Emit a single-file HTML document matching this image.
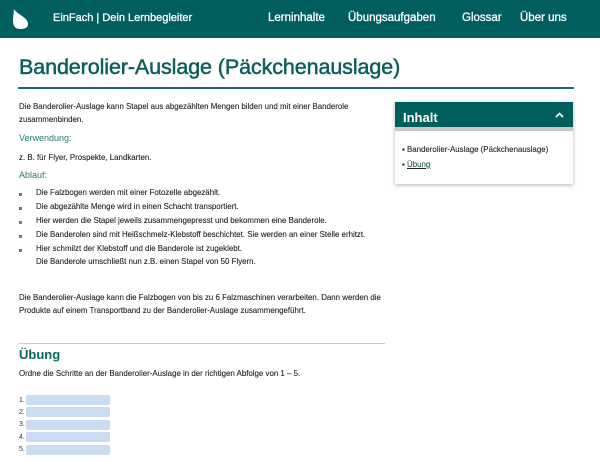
<!DOCTYPE html>
<html><head><meta charset="utf-8"><style>
*{margin:0;padding:0;box-sizing:border-box}
body{width:600px;height:462px;overflow:hidden;background:#fff;font-family:"Liberation Sans",sans-serif;color:#222;position:relative}
.hdr{position:absolute;left:0;top:0;width:600px;height:38px;background:#005f5d;color:#fff;font-size:12px;-webkit-text-stroke:0.3px #fff}
.hdr span{position:absolute;top:12px}
h1{position:absolute;left:19px;top:55px;font-size:21.5px;color:#0d5e5b;font-weight:normal;letter-spacing:-0.1px;-webkit-text-stroke:0.5px #0d5e5b}
.rule{position:absolute;left:18px;top:87px;width:556px;height:2px;background:#1a6663}
.t{position:absolute;font-size:7.9px;color:#222;line-height:12.5px;-webkit-text-stroke:0.1px #222}
.g{position:absolute;font-size:9px;color:#2a7a70}
.b{position:absolute;left:19px;width:3px;height:3px;background:#4a8a7a}
.box{position:absolute;left:395px;top:102px;width:178px;height:82px;box-shadow:0 1px 4px rgba(0,0,0,.3);background:#fff}
.box .h{height:29px;background:#005f5d;color:#fff;font-size:13px;font-weight:bold;padding:8px 8px;border-bottom:4px solid #c8c8c8;position:relative}
.in{position:absolute;left:26px;width:84px;height:10px;background:#c9dcf1;border-radius:2px}
.n{position:absolute;left:19px;font-size:7px;color:#333}
</style></head><body>
<div class="hdr">
<svg style="position:absolute;left:12px;top:8px" width="18" height="22" viewBox="0 0 18 22"><path d="M2 1 C4 6 16 9 16 16 C16 20 12 21 8 21 C3 21 1 18 1 12 Z" fill="#fff"/></svg>
<span style="left:53px;font-size:11px">EinFach | Dein Lernbegleiter</span>
<span style="left:268px;font-size:11.5px">Lerninhalte</span>
<span style="left:348px;font-size:11.5px">Übungsaufgaben</span>
<span style="left:462px;font-size:11.5px">Glossar</span>
<span style="left:520px;font-size:11.5px">Über uns</span>
</div>
<h1>Banderolier-Auslage (Päckchenauslage)</h1>
<div class="rule"></div>
<div class="t" style="left:19px;top:101px;width:360px">Die Banderolier-Auslage kann Stapel aus abgezählten Mengen bilden und mit einer Banderole zusammenbinden.</div>
<div class="g" style="left:19px;top:133px">Verwendung:</div>
<div class="t" style="left:19px;top:152px">z. B. für Flyer, Prospekte, Landkarten.</div>
<div class="g" style="left:19px;top:170px">Ablauf:</div>
<div class="b" style="top:193px"></div><div class="t" style="left:36px;top:187px">Die Falzbogen werden mit einer Fotozelle abgezählt.</div>
<div class="b" style="top:207px"></div><div class="t" style="left:36px;top:201px">Die abgezählte Menge wird in einen Schacht transportiert.</div>
<div class="b" style="top:221px"></div><div class="t" style="left:36px;top:215px">Hier werden die Stapel jeweils zusammengepresst und bekommen eine Banderole.</div>
<div class="b" style="top:235px"></div><div class="t" style="left:36px;top:229px">Die Banderolen sind mit Heißschmelz-Klebstoff beschichtet. Sie werden an einer Stelle erhitzt.</div>
<div class="b" style="top:249px"></div><div class="t" style="left:36px;top:243px">Hier schmilzt der Klebstoff und die Banderole ist zugeklebt.<br>Die Banderole umschließt nun z.B. einen Stapel von 50 Flyern.</div>
<div class="t" style="left:19px;top:292px;width:370px">Die Banderolier-Auslage kann die Falzbogen von bis zu 6 Falzmaschinen verarbeiten. Dann werden die Produkte auf einem Transportband zu der Banderolier-Auslage zusammengeführt.</div>
<div style="position:absolute;left:19px;top:343px;width:366px;height:1px;background:#ccc"></div>
<div style="position:absolute;left:19px;top:347px;font-size:13px;font-weight:bold;color:#0d6660">Übung</div>
<div class="t" style="left:19px;top:368px">Ordne die Schritte an der Banderolier-Auslage in der richtigen Abfolge von 1 – 5.</div>
<div class="n" style="top:397px">1.</div><div class="in" style="top:395px"></div>
<div class="n" style="top:409px">2.</div><div class="in" style="top:407px"></div>
<div class="n" style="top:421px">3.</div><div class="in" style="top:420px"></div>
<div class="n" style="top:434px">4.</div><div class="in" style="top:432px"></div>
<div class="n" style="top:446px">5.</div><div class="in" style="top:445px"></div>
<div class="box"><div class="h">Inhalt<svg style="position:absolute;right:9px;top:10px" width="9" height="6" viewBox="0 0 9 6"><path d="M1 5 L4.5 1.5 L8 5" fill="none" stroke="#fff" stroke-width="1.8"/></svg></div>
<div class="t" style="left:7px;top:42px">▪ Banderolier-Auslage (Päckchenauslage)</div>
<div class="t" style="left:7px;top:57px">▪ <u style="color:#2a6a5a">Übung</u></div>
</div>
</body></html>
